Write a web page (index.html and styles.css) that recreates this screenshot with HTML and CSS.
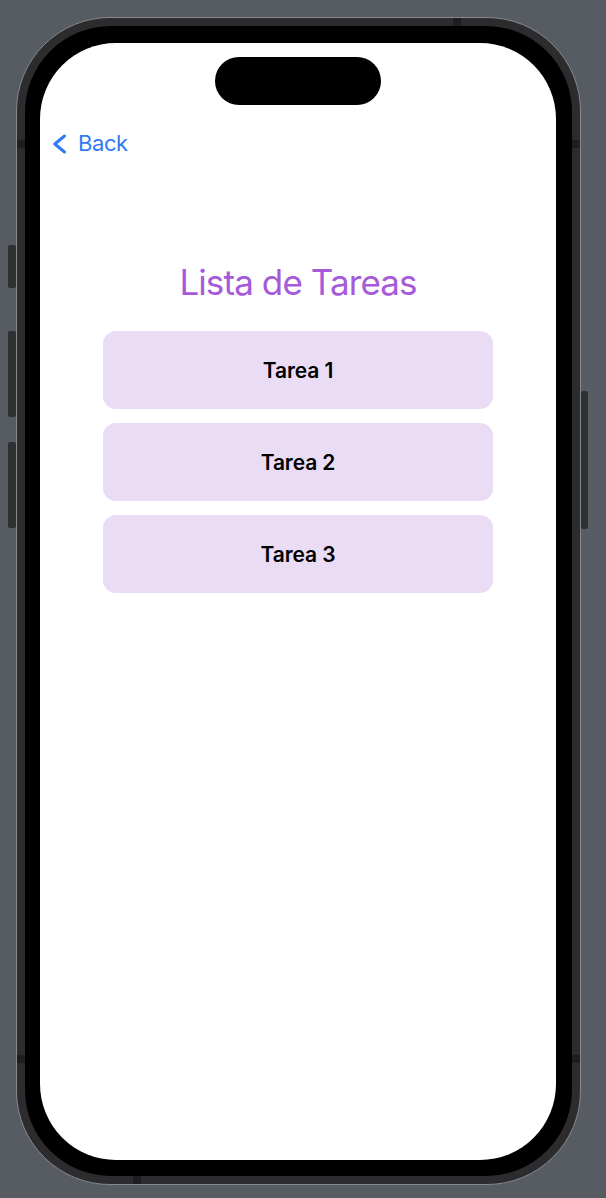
FILE: index.html
```html
<!DOCTYPE html>
<html lang="es">
<head>
<meta charset="utf-8">
<title>Lista de Tareas</title>
<link rel="stylesheet" href="styles.css">
</head>
<body>
  <div class="phone">
    <span class="side-btn left b1"></span>
    <span class="side-btn left b2"></span>
    <span class="side-btn left b3"></span>
    <span class="side-btn right b4"></span>
    <span class="antenna a-left a-top1"></span>
    <span class="antenna a-left a-bot1"></span>
    <span class="antenna a-right a-top1"></span>
    <span class="antenna a-right a-bot1"></span>
    <span class="antenna a-topband"></span>
    <span class="antenna a-bottomband"></span>
    <div class="bezel">
      <div class="screen">
        <div class="island"></div>
        <div class="nav">
          <svg class="chevron" width="16" height="22" viewBox="0 0 16 22" aria-hidden="true">
            <polyline points="12.5,3 2.8,11 12.5,19" fill="none" stroke="#3179f5" stroke-width="3" stroke-linecap="round" stroke-linejoin="round"/>
          </svg>
          <span class="back">Back</span>
        </div>
        <h1 class="title">Lista de Tareas</h1>
        <div class="tasks">
          <div class="task">Tarea 1</div>
          <div class="task">Tarea 2</div>
          <div class="task">Tarea 3</div>
        </div>
      </div>
    </div>
  </div>
</body>
</html>
```
FILE: styles.css
```css
* { box-sizing: border-box; }

html, body {
  margin: 0;
  padding: 0;
}

body {
  width: 606px;
  height: 1198px;
  background: #575c63;
  font-family: Inter, "Noto Sans", "Liberation Sans", sans-serif;
  overflow: hidden;
}

.phone {
  position: relative;
  margin: 17px 0 0 16px;
  width: 565px;
  height: 1168px;
  border: 1px solid #85888d;
  border-radius: 94px;
  background: #2c2c2e;
  padding: 8px;
}

.bezel {
  height: 100%;
  background: #000;
  border-radius: 86px;
  padding: 17px 16px 16px 15px;
}

.screen {
  height: 100%;
  background: #fff;
  border-radius: 76px;
  overflow: hidden;
  display: flex;
  flex-direction: column;
  align-items: center;
}

.island {
  width: 166px;
  height: 48px;
  margin-top: 14px;
  border-radius: 24px;
  background: #000;
  flex: none;
}

.nav {
  align-self: stretch;
  display: flex;
  align-items: center;
  gap: 10px;
  margin-top: 25px;
  padding-left: 12px;
  height: 26px;
}

.chevron {
  display: block;
  flex: none;
  margin-top: 2px;
}

.back {
  font-size: 22px;
  line-height: 26px;
  color: #3179f5;
  letter-spacing: -0.4px;
}

.title {
  margin: 104px 0 0;
  font-size: 35px;
  line-height: 44px;
  font-weight: 400;
  color: #a65ad9;
  letter-spacing: -0.9px;
}

.tasks {
  margin-top: 27px;
  display: flex;
  flex-direction: column;
  gap: 14px;
  width: 390px;
}

.task {
  height: 78px;
  border-radius: 13px;
  background: #ebdcf5;
  display: flex;
  align-items: center;
  justify-content: center;
  font-size: 21px;
  font-weight: 600;
  color: #000;
  letter-spacing: -0.1px;
}

/* hardware decorations on the frame */
.side-btn {
  position: absolute;
  background: #2f3032;
  border-radius: 2px;
}
.side-btn.left { left: -9px; width: 8px; }
.side-btn.right { right: -8px; width: 7px; }
.b1 { top: 227px; height: 43px; }
.b2 { top: 313px; height: 86px; }
.b3 { top: 424px; height: 86px; }
.b4 { top: 373px; height: 138px; }

.antenna {
  position: absolute;
  background: #1e1e20;
}
.a-left { left: 0; width: 8px; height: 8px; }
.a-right { right: 0; width: 8px; height: 8px; }
.a-top1 { top: 122px; }
.a-bot1 { top: 1037px; }
.a-topband { top: 0; left: 436px; width: 8px; height: 8px; }
.a-bottomband { bottom: 0; left: 116px; width: 8px; height: 8px; }
```
